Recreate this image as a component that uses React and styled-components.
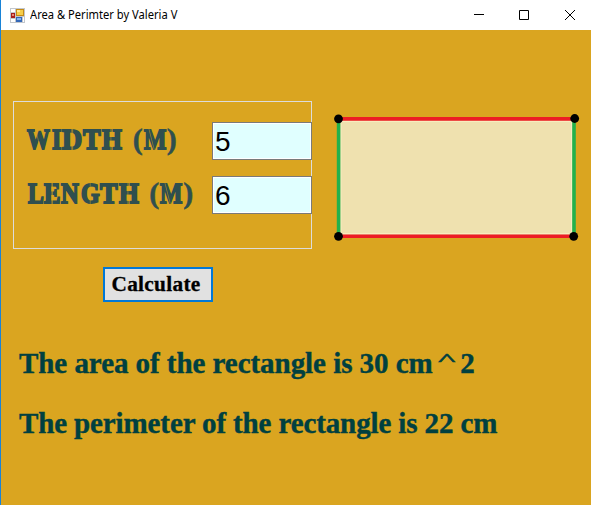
import React from "react";
import styled, { createGlobalStyle } from "styled-components";

const GlobalStyle = createGlobalStyle`
  * { box-sizing: border-box; }
  body { margin: 0; background: #daa520; overflow: hidden; }
`;

const Window = styled.div`
  width: 591px;
  height: 505px;
  display: flex;
  flex-direction: column;
  background: #daa520;
  border-left: 1px solid #1883d7;
  overflow: hidden;
`;

const TitleBar = styled.header`
  height: 30px;
  flex: none;
  display: flex;
  align-items: center;
  background: #fff;
  padding-left: 9px;
`;

const Title = styled.h1`
  margin: 0 0 0 5px;
  flex: 1;
  font: 400 12px/16px "Noto Sans", sans-serif;
  color: #000;
  white-space: nowrap;
`;

const TitleText = styled.span`
  display: inline-block;
  transform: scaleX(${(p) => p.$scale});
  transform-origin: left;
`;

const WindowButtons = styled.div`
  display: flex;
  margin-right: -2px;
`;

const WindowButton = styled.button`
  width: ${(p) => p.$width || 46}px;
  height: 30px;
  padding: 0;
  border: 0;
  background: transparent;
  display: grid;
  place-items: center;
`;

const Form = styled.main`
  flex: 1;
  display: flex;
  flex-direction: column;
  padding: 71px 0 0 12px;
`;

const InputArea = styled.div`
  display: flex;
  align-items: flex-start;
`;

const Group = styled.section`
  width: 299px;
  height: 148px;
  padding: 20px 0 0 13px;
  border: 1px solid #dcdcdc;
  display: flex;
  flex-direction: column;
  gap: 16px;
`;

const Field = styled.label`
  height: 38px;
  display: grid;
  grid-template-columns: 185px 100px;
`;

const FieldName = styled.span`
  display: flex;
  padding-left: ${(p) => p.$indent}px;
  font: 700 30px/34px "Liberation Serif", serif;
  color: #2f4f4f;
  white-space: pre;
  -webkit-text-stroke: 1.9px #2f4f4f;
`;

const Cell = styled.span`
  flex: none;
  width: ${(p) => p.$advance}px;
`;

/* One stencil letter: condensed, with an optional narrow bridge cut through it. */
const Letter = styled.span`
  position: relative;
  display: inline-block;
  transform: scaleX(${(p) => p.$scale});
  transform-origin: left;
  -webkit-text-stroke-width: ${(p) => (p.$thin ? 0.5 : 1.9)}px;

  &::after {
    content: "";
    display: ${(p) => (p.$cut ? "block" : "none")};
    position: absolute;
    top: 6px;
    bottom: 6px;
    left: ${(p) => p.$cut}%;
    width: 1.2px;
    background: #daa520;
    opacity: 0.55;
    transform: skewX(${(p) => p.$slant || 0}deg);
  }
`;

const NumberBox = styled.input`
  width: 100px;
  height: 38px;
  padding: 1px 0 0 2px;
  border: 1px solid #7a7a7a;
  border-radius: 0;
  outline: 0;
  background: #e0ffff;
  box-shadow: inset 0 0 0 1px #fff;
  color: #000;
  font: 400 28px/34px "Liberation Sans", sans-serif;
`;

const Diagram = styled.svg`
  display: block;
  margin: 11px 0 0 20px;
`;

const CalculateButton = styled.button`
  width: 110px;
  height: 35px;
  margin: 18px 0 0 90px;
  padding: 0 4px 1px 0;
  border: 2px solid #0078d7;
  background: #e1e1e1;
  color: #000;
  font: 700 21.3px/30px "Liberation Serif", serif;
  letter-spacing: 0.3px;
  -webkit-text-stroke: 0.3px #000;
  white-space: nowrap;
`;

const Results = styled.div`
  margin: 43px 0 0 6px;
  display: flex;
  flex-direction: column;
  gap: 24px;
`;

const Result = styled.p`
  margin: 0;
  height: 36px;
  font: 700 29px/36px "Liberation Serif", serif;
  letter-spacing: ${(p) => p.$spacing}px;
  color: #004040;
  -webkit-text-stroke: 0.4px #004040;
  white-space: pre;
`;

const Caret = styled.span`
  margin: 0 7px 0 7px;
  font-weight: 400;
  font-size: 29px;
  display: inline-block;
  transform: scale(1.25, 0.55);
  transform-origin: 50% 28%;
  -webkit-text-stroke-width: 1px;
`;

const LETTERS = {
  W: { $scale: 0.76, $cut: 46, $slant: 18 },
  I: { $scale: 0.8 },
  D: { $scale: 0.93, $cut: 48 },
  T: { $scale: 0.88 },
  H: { $scale: 0.85, $cut: 44 },
  L: { $scale: 0.79 },
  E: { $scale: 0.82, $cut: 47 },
  N: { $scale: 0.82 },
  G: { $scale: 0.8, $cut: 48 },
  M: { $scale: 0.79, $cut: 31, $slant: 18 },
  "(": { $scale: 1, $thin: true },
  ")": { $scale: 1, $thin: true },
};

const StencilName = ({ text, advances, indent }) => (
  <FieldName $indent={indent}>
    {[...text].map((ch, i) => (
      <Cell key={i} $advance={advances[i]}>
        {ch === " " ? " " : <Letter {...LETTERS[ch]}>{ch}</Letter>}
      </Cell>
    ))}
  </FieldName>
);

const AppIcon = () => (
  <svg width="15" height="15" viewBox="0 0 15 15" shapeRendering="crispEdges">
    <rect width="15" height="15" fill="#c3c7cc" />
    <path d="M1 1h4v3H1zM1 11h4v3H1zM13 9h1v5h-1z" fill="#fff" />
    <rect x="6" y="1" width="8" height="7" fill="#c58b16" />
    <rect x="7" y="2" width="6" height="5" fill="#f6ce4b" />
    <rect x="7" y="2" width="3" height="2" fill="#ffe891" />
    <rect x="1" y="5" width="4" height="5" fill="#a71e1d" />
    <rect x="2" y="6" width="2" height="2" fill="#e88773" />
    <rect x="6" y="9" width="6" height="5" fill="#3468b8" />
    <rect x="7" y="10" width="4" height="2" fill="#86b5ed" />
  </svg>
);

const RectangleDiagram = () => (
  <Diagram width="250" height="132" viewBox="332 112 250 132">
    <rect x="339" y="119" width="235" height="117" fill="#efe1af" />
    <path d="M341 236V121.5H571.5V233.5H341" fill="none" stroke="#f8edbf" />
    <path d="M338.6 119V236M574 119V236" stroke="#22b14c" strokeWidth="3.6" />
    <path d="M338 118.9H575M338 236.2H574" stroke="#ed1c24" strokeWidth="3.6" />
    <circle cx="338.5" cy="118.8" r="4.4" />
    <circle cx="574.7" cy="118.5" r="4.4" />
    <circle cx="338.5" cy="236.3" r="4.4" />
    <circle cx="573.7" cy="236.3" r="4.4" />
  </Diagram>
);

export default function App() {
  return (
    <>
      <GlobalStyle />
      <Window>
        <TitleBar>
          <AppIcon />
          <Title><TitleText $scale={0.93}>Area &amp; Perimter by Valeria V</TitleText></Title>
          <WindowButtons>
            <WindowButton $width={44} aria-label="Minimize">
              <svg width="10" height="10"><path d="M0 4.5h10" stroke="#000" /></svg>
            </WindowButton>
            <WindowButton aria-label="Maximize">
              <svg width="10" height="10"><path d="M.5.5h9v9h-9z" fill="none" stroke="#000" /></svg>
            </WindowButton>
            <WindowButton aria-label="Close">
              <svg width="10" height="10"><path d="M0 0l10 10M10 0L0 10" stroke="#000" /></svg>
            </WindowButton>
          </WindowButtons>
        </TitleBar>
        <Form>
          <InputArea>
            <Group>
              <Field>
                <StencilName
                  text="WIDTH (M)"
                  indent={0}
                  advances={[25.3, 9.6, 21, 19.3, 24, 6.5, 11, 23, 11]}
                />
                <NumberBox defaultValue="5" />
              </Field>
              <Field>
                <StencilName
                  text="LENGTH (M)"
                  indent={0.5}
                  advances={[16.5, 17.3, 19.7, 19.2, 18.7, 24, 6.5, 11, 23, 11]}
                />
                <NumberBox defaultValue="6" />
              </Field>
            </Group>
            <RectangleDiagram />
          </InputArea>
          <CalculateButton>Calculate</CalculateButton>
          <Results>
            <Result $spacing={-0.05}>The area of the rectangle is 30 cm<Caret>^</Caret>2</Result>
            <Result $spacing={-0.12}>The perimeter of the rectangle is 22 cm</Result>
          </Results>
        </Form>
      </Window>
    </>
  );
}
